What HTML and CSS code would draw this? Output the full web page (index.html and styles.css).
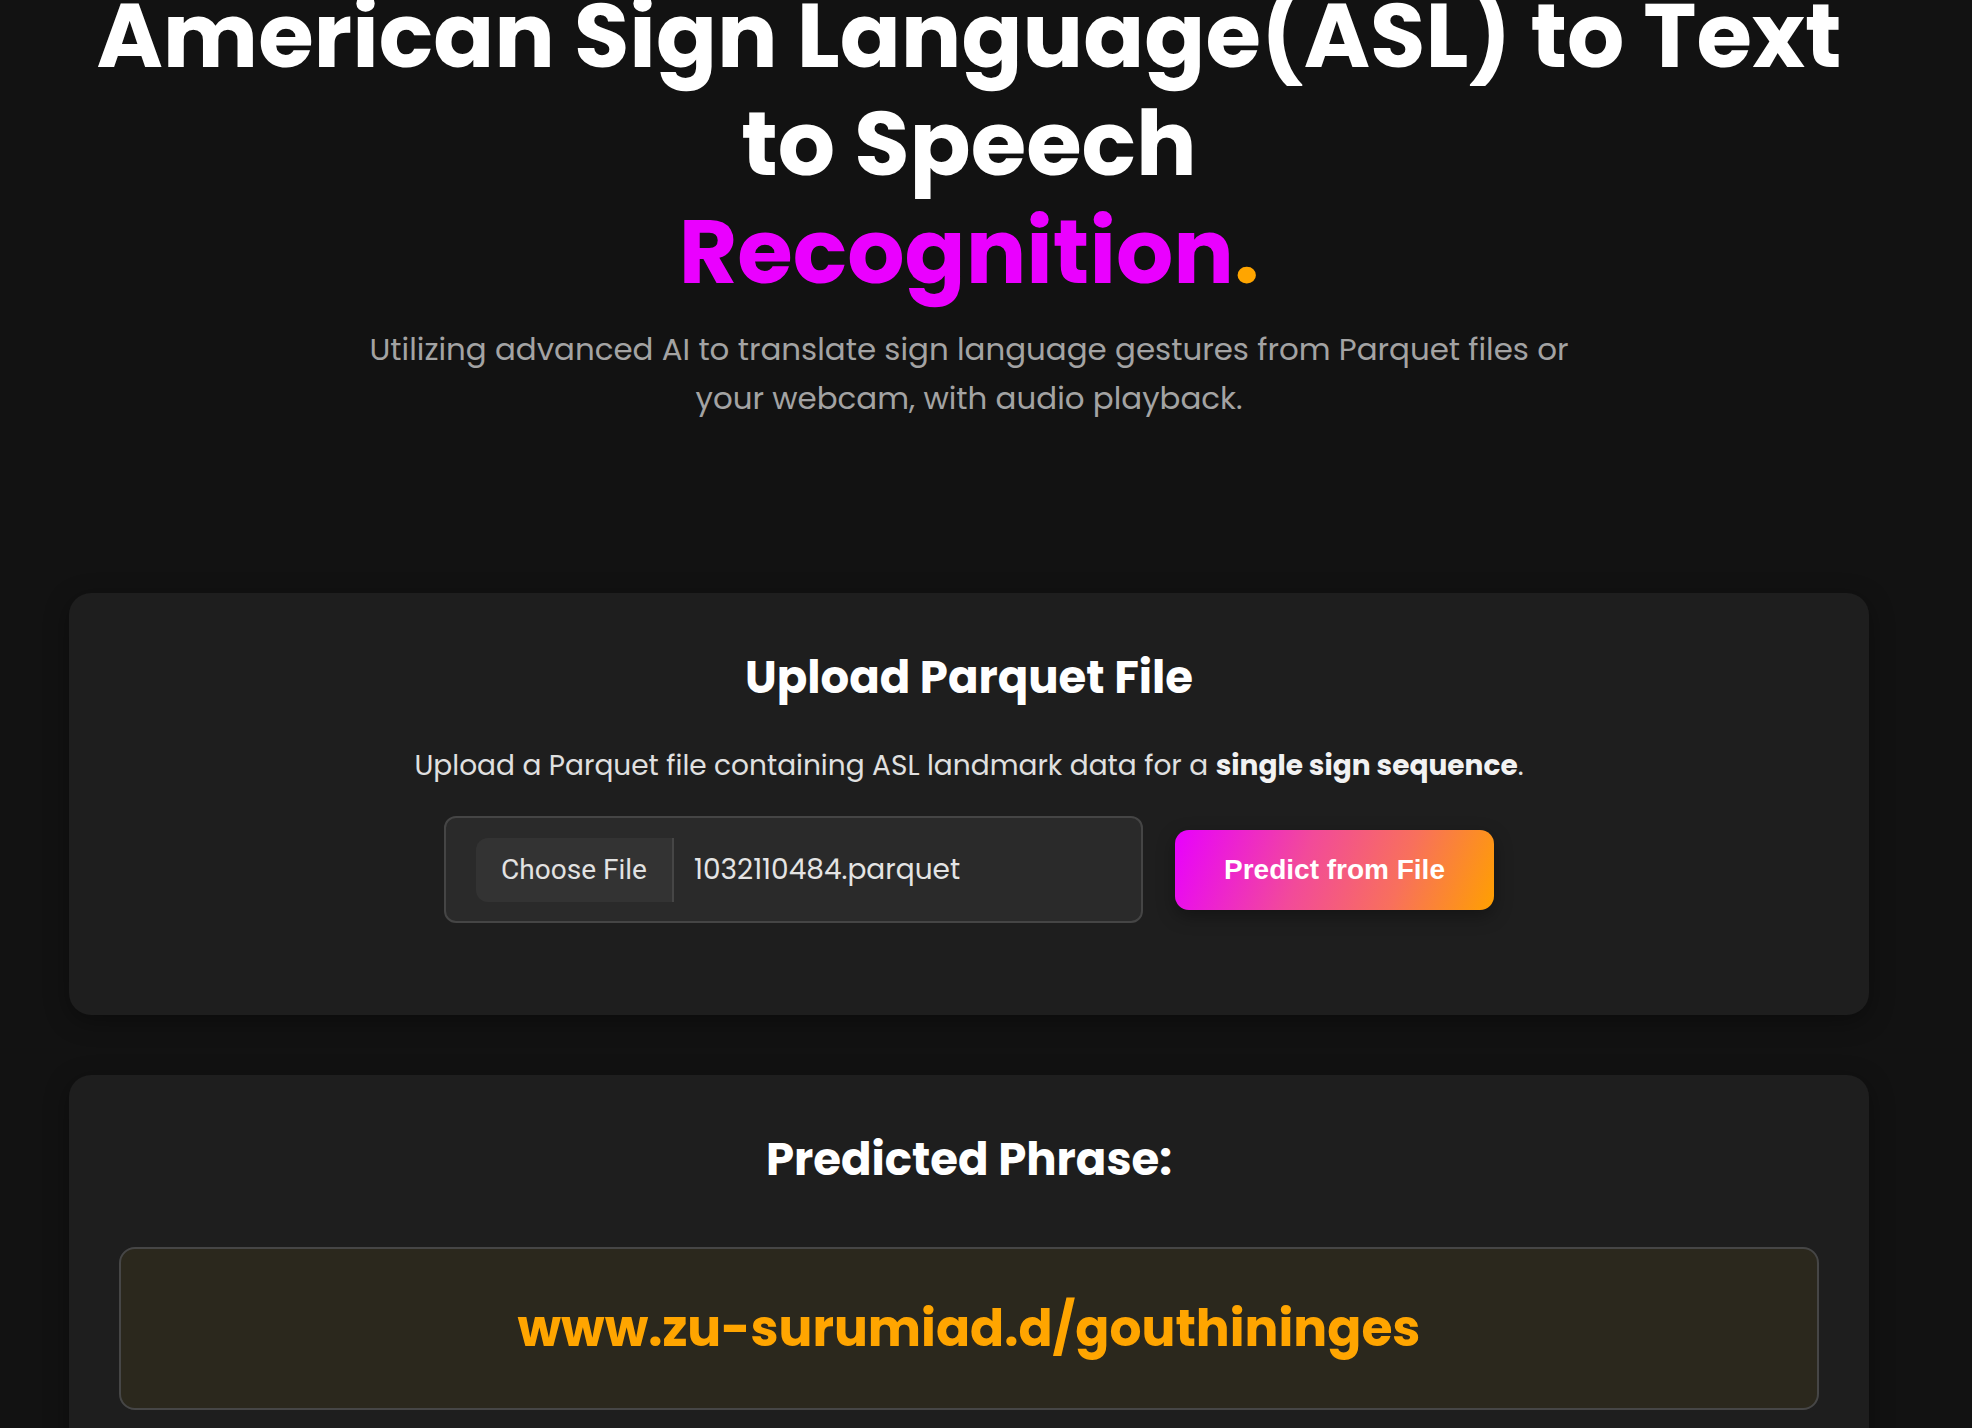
FILE: index.html
```html
<!DOCTYPE html>
<html lang="en">
<head>
<meta charset="utf-8">
<title>ASL to Text to Speech Recognition</title>
<link rel="stylesheet" href="styles.css">
</head>
<body>
<main class="page">
  <header class="hero">
    <h1 class="hero-title">American Sign Language(ASL) to Text<br>to Speech<span class="hero-accent">Recognition<span class="hero-dot">.</span></span></h1>
    <p class="hero-sub">Utilizing advanced AI to translate sign language gestures from Parquet files or<br>your webcam, with audio playback.</p>
  </header>

  <section class="card upload-card">
    <h2 class="card-title">Upload Parquet File</h2>
    <p class="card-desc">Upload a Parquet file containing ASL landmark data for a <strong>single sign sequence</strong>.</p>
    <div class="upload-row">
      <label class="file-box">
        <span class="file-btn">Choose File</span>
        <span class="file-name">1032110484.parquet</span>
      </label>
      <button class="predict-btn" type="button">Predict from File</button>
    </div>
  </section>

  <section class="card result-card">
    <h2 class="card-title">Predicted Phrase:</h2>
    <div class="phrase-box">
      <span class="phrase">www.zu-surumiad.d/gouthininges</span>
    </div>
  </section>
</main>
</body>
</html>
```

FILE: styles.css
```css
* {
  box-sizing: border-box;
}

html, body {
  margin: 0;
  padding: 0;
  background: #121212;
  color: #ffffff;
  font-family: "Poppins", Inter, "Noto Sans", sans-serif;
  overflow: hidden;
}

.page {
  width: 1800px;
  margin-left: 69px;
  display: flex;
  flex-direction: column;
}

.hero {
  display: flex;
  flex-direction: column;
  align-items: center;
  text-align: center;
  margin-top: -18px;
}

.hero-title {
  margin: 0;
  font-size: 90px;
  font-weight: 700;
  line-height: 108px;
  color: #ffffff;
}

.hero-accent {
  display: block;
  color: #ea00ff;
}

.hero-dot {
  color: #ffa500;
}

.hero-sub {
  margin: 19px 0 0;
  font-size: 30.9px;
  line-height: 49px;
  color: #a3a3a3;
  font-weight: 400;
}

.card {
  background: #1e1e1e;
  border-radius: 22px;
  padding: 58px 50px 50px;
  display: flex;
  flex-direction: column;
  align-items: center;
  box-shadow: 0 6px 24px rgba(0, 0, 0, 0.35);
}

.upload-card {
  margin-top: 170px;
  height: 422px;
}

.result-card {
  margin-top: 60px;
  align-items: stretch;
}

.card-title {
  margin: 0;
  font-size: 45px;
  line-height: 53px;
  font-weight: 700;
  text-align: center;
  color: #ffffff;
}

.card-desc {
  margin: 42px 0 0;
  font-size: 28px;
  line-height: 40px;
  color: #e0e0e0;
}

.card-desc strong {
  color: #f2f2f2;
  font-weight: 700;
}

.upload-row {
  margin-top: 30px;
  display: flex;
  align-items: center;
  gap: 32px;
}

.file-box {
  width: 699px;
  height: 107px;
  display: flex;
  align-items: center;
  padding: 0 30px;
  background: #2a2a2a;
  border: 2px solid #454545;
  border-radius: 12px;
}

.file-btn {
  height: 64px;
  width: 198px;
  display: flex;
  align-items: center;
  justify-content: center;
  background: #333333;
  border-right: 2px solid #464646;
  border-radius: 12px 0 0 12px;
  font-family: Roboto, "Liberation Sans", sans-serif;
  font-size: 28px;
  color: #e2e2e2;
}

.file-name {
  margin-left: 20px;
  font-size: 28px;
  color: #e4e4e4;
}

.predict-btn {
  width: 319px;
  height: 80px;
  border: 0;
  border-radius: 14px;
  background: linear-gradient(110deg, #e800ff 0%, #f24a9a 40%, #f8705c 70%, #ffa000 100%);
  color: #ffffff;
  font-family: "Liberation Sans", Arial, sans-serif;
  font-weight: 700;
  font-size: 28px;
  box-shadow: 0 6px 18px rgba(0, 0, 0, 0.35);
}

.phrase-box {
  margin-top: 61px;
  height: 163px;
  display: flex;
  align-items: center;
  justify-content: center;
  background: #2b281d;
  border: 2px solid #464646;
  border-radius: 16px;
}

.phrase {
  font-size: 50.3px;
  font-weight: 700;
  color: #ffa500;
}
```
